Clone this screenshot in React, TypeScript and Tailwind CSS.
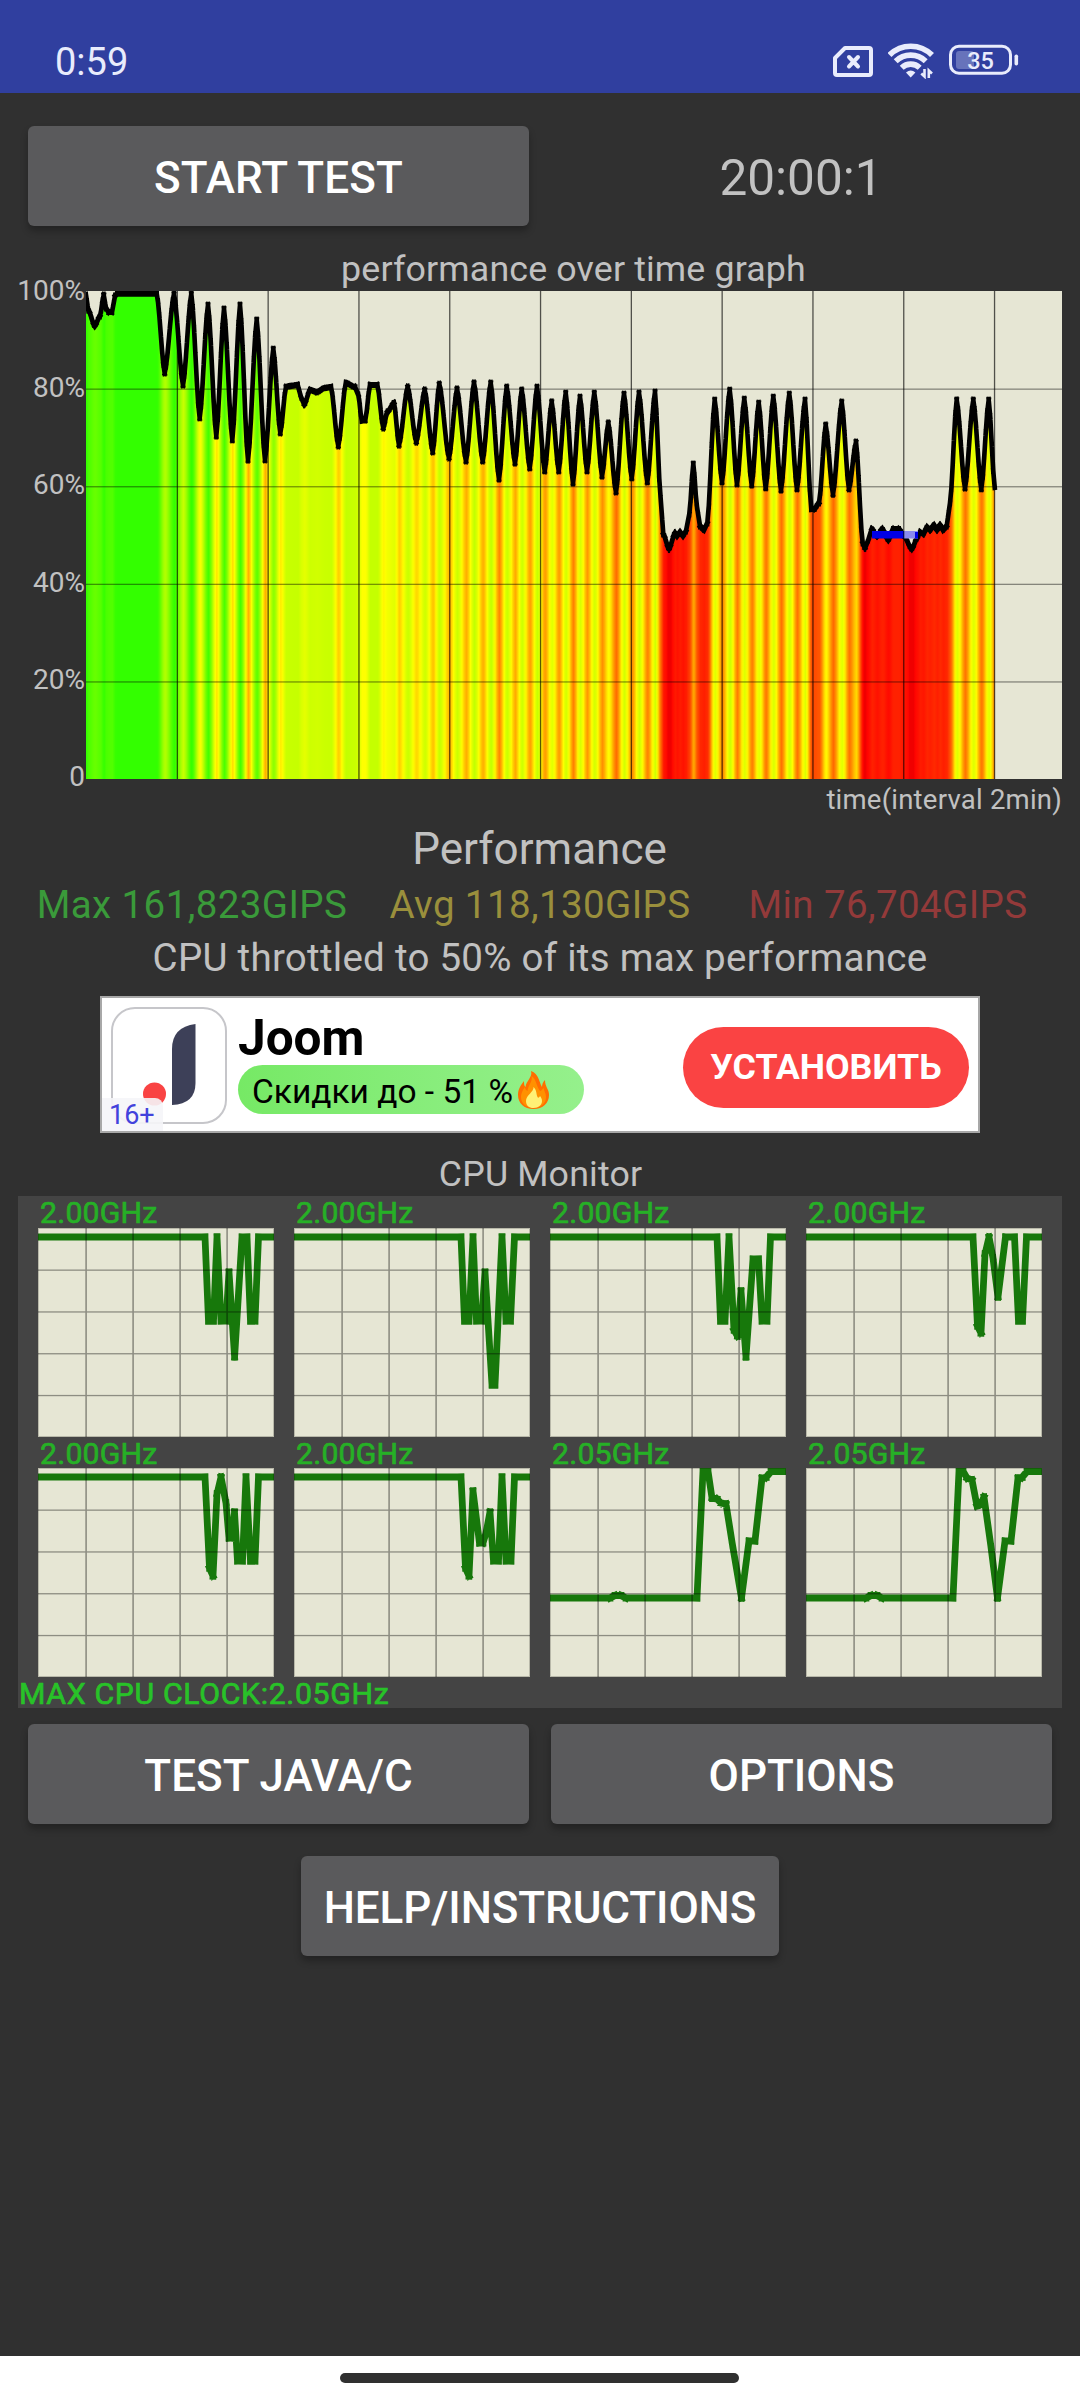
import type { ReactNode } from 'react';

type Point = [number, number];

const CHART_W = 976;
const CHART_H = 488;

// turning points of the performance curve, in chart pixels
const PERF: Point[] = [
  [0, 4], [2.3, 19], [8.7, 35], [14, 25], [17.7, 4], [20, 17], [22.5, 21], [26, 21], [29, 5], [31.3, 2.6],
  [70.7, 2.6], [78.7, 82], [88, 3], [97, 94], [105.3, 3], [113.7, 127], [122, 14], [130.3, 145], [138, 18],
  [146.3, 149], [154, 14], [162, 169], [170.7, 29], [179, 169], [187.3, 58], [194.3, 142], [200, 96],
  [204, 95], [211.7, 94], [215, 106], [218.3, 113.5], [224, 99], [230.7, 101], [239, 97], [245, 96],
  [252.3, 155], [259.8, 92], [269, 96], [272.3, 104], [275.8, 129.5], [279.3, 129], [284, 94], [291.3, 94],
  [297.3, 137], [301.3, 121], [308, 112], [313, 154], [321.7, 96], [330.3, 151], [338.7, 99], [346.7, 161],
  [353.3, 93], [363, 167], [371, 98], [380, 170], [388, 92], [396.7, 170], [404.7, 92], [413, 188],
  [420.7, 96], [429, 172], [435.7, 99], [443.7, 177], [451, 96], [458.7, 180], [465.7, 111], [472.7, 180],
  [479.7, 102], [487, 192], [494, 106], [501, 180], [508.3, 102], [516, 185], [522.3, 132], [530, 201],
  [538, 103], [545.7, 187], [553, 102], [561.3, 191], [569, 101], [574.7, 208], [577.3, 243], [583, 258],
  [589, 242], [591, 245], [594, 241], [597, 245], [600, 240], [603.3, 223], [607.3, 173], [611, 216], [614, 235],
  [618, 239], [621.3, 232], [628.7, 109], [636, 191], [643.7, 99], [651, 193], [658.3, 108], [665.7, 194],
  [672.7, 112], [679.7, 197], [687.3, 106], [695, 199], [703.3, 103], [711, 198], [719, 109], [725.3, 218],
  [728.3, 218], [733, 212], [739.7, 134], [747, 203], [755.7, 111], [763, 198], [770, 151], [776.7, 252],
  [779, 257], [782.3, 249], [785.7, 238], [791, 245], [796.3, 238], [802.3, 249], [807.3, 238], [812.7, 238],
  [818, 245], [825.7, 258], [831.3, 247], [834, 241], [837.3, 243], [841, 236], [844, 239], [848, 234],
  [851, 239], [854, 234], [857, 239], [860.7, 235], [864, 212], [870.7, 109], [879, 197], [887.3, 109],
  [895.3, 198], [902.7, 109], [908.7, 196],
];

// eases between turning points so peaks and dips are slightly rounded
function densify(points: Point[]): Point[] {
  const out: Point[] = [points[0]];
  for (let i = 1; i < points.length; i++) {
    const [x0, y0] = points[i - 1];
    const [x1, y1] = points[i];
    const steps = Math.max(1, Math.round((x1 - x0) / 1.4));
    for (let s = 1; s <= steps; s++) {
      const t = s / steps;
      const eased = t * 0.4 + ((1 - Math.cos(Math.PI * t)) / 2) * 0.6;
      out.push([x0 + (x1 - x0) * t, y0 + (y1 - y0) * eased]);
    }
  }
  return out;
}

const CURVE = densify(PERF);

function heat(y: number) {
  const pct = 100 - (y / CHART_H) * 100;
  const r = pct < 48 ? 240 : Math.min(255, Math.round(51 + (99.5 - pct) * 7.8));
  const g = Math.max(0, Math.min(255, Math.round((pct - 48) * 10.2)));
  return `rgb(${r},${g},0)`;
}

function toPath(points: Point[]) {
  return points.map(([x, y], i) => `${i ? 'L' : 'M'}${x.toFixed(1)} ${y.toFixed(1)}`).join('');
}

// one separate stroke per sample pair, so every segment gets its own caps
function toSegments(points: Point[], sx: number) {
  return points
    .slice(1)
    .map(([x, y], i) => `M${(points[i][0] / sx).toFixed(2)} ${points[i][1].toFixed(1)}L${(x / sx).toFixed(2)} ${y.toFixed(1)}`)
    .join('');
}

function PerformanceChart() {
  const end = CURVE[CURVE.length - 1][0];
  return (
    <svg width={CHART_W} height={CHART_H} viewBox={`0 0 ${CHART_W} ${CHART_H}`} className="block bg-[#e6e6d4]">
      <defs>
        <linearGradient id="heat" gradientUnits="userSpaceOnUse" x1="0" x2={end} y1="0" y2="0">
          {CURVE.map(([x, y], i) => (
            <stop key={i} offset={(x + 0.5) / end} stopColor={heat(y)} />
          ))}
        </linearGradient>
      </defs>
      <path d={`${toPath(CURVE)}V${CHART_H}H0Z`} fill="url(#heat)" />
      <path
        d={toSegments(CURVE, 0.75)}
        transform="scale(0.75 1)"
        fill="none"
        stroke="#000"
        strokeWidth="6.2"
        strokeLinecap="square"
      />
      <rect x="786" y="240" width="32" height="7.5" fill="#0000e6" />
      <rect x="818" y="240" width="14" height="7.5" fill="#8a8aee" />
      <rect x="829" y="241" width="3" height="6.5" fill="#0000e6" />
      {[1, 2, 3, 4].map((i) => (
        <rect key={i} x="0" y={i * 97.6 - 0.1} width={CHART_W} height="1.3" fill="#000" opacity="0.42" />
      ))}
      {[1, 2, 3, 4, 5, 6, 7, 8, 9, 10].map((i) => (
        <rect key={i} x={i * 90.8 - 0.1} y="0" width="1.3" height={CHART_H} fill="#000" opacity="0.65" />
      ))}
    </svg>
  );
}

const DIP_TAIL: Point[] = [[191.5, 130], [199, 73], [205, 73], [212, 10], [216, 9.5], [221, 3.5], [236, 3.5]];

const CORES: { label: string; points: Point[] }[] = [
  {
    label: '2.00GHz',
    points: [[0, 9], [167, 9], [170.5, 93], [175.5, 93], [179, 9], [183, 93], [188, 93], [191, 44], [196.6, 129],
      [204, 9], [209, 9], [212.5, 93], [217, 93], [220.5, 9], [236, 9]],
  },
  {
    label: '2.00GHz',
    points: [[0, 9], [167, 9], [170.5, 93], [175, 93], [179, 9], [182.5, 93], [187.5, 93], [191, 44], [198, 157],
      [201, 157], [208, 9], [212, 93], [216.5, 93], [220.5, 9], [236, 9]],
  },
  {
    label: '2.00GHz',
    points: [[0, 9], [167, 9], [170.5, 93], [175, 93], [179, 9], [184, 102], [187.5, 108], [191, 63], [196, 129],
      [203, 31], [208.5, 31], [212, 93], [217, 93], [220.5, 9], [236, 9]],
  },
  {
    label: '2.00GHz',
    points: [[0, 9], [167, 9], [171.5, 98], [175, 105], [179, 26], [183, 9], [187, 30], [192, 69], [199.5, 9],
      [208.5, 9], [212.5, 93], [216.5, 93], [220.5, 9], [236, 9]],
  },
  {
    label: '2.00GHz',
    points: [[0, 9], [167, 9], [171.5, 100], [175, 108], [179, 26], [183, 9], [188, 35], [191, 70], [194, 70],
      [196.5, 44], [199.5, 93], [204.5, 93], [208, 9], [212.5, 93], [217, 93], [220.5, 9], [236, 9]],
  },
  {
    label: '2.00GHz',
    points: [[0, 9], [167, 9], [171.5, 100], [175, 108], [179, 23], [185.5, 75], [189, 75], [192, 65], [196, 44],
      [199.5, 93], [204.5, 93], [208, 9], [212, 93], [217, 93], [220.5, 9], [236, 9]],
  },
  {
    label: '2.05GHz',
    points: [[0, 130], [60, 130], [65, 127.5], [71, 127.5], [76, 130], [147, 130], [153, 3], [158, 3], [162, 30],
      [167, 31], [171, 35], [176, 36], [182.5, 77], ...DIP_TAIL],
  },
  {
    label: '2.05GHz',
    points: [[0, 130], [60, 130], [65, 127.5], [71, 127.5], [76, 130], [147, 130], [153, 3], [157, 3], [161, 10],
      [166, 12], [171, 38], [175, 36], [178, 29], [185, 79], ...DIP_TAIL],
  },
];

function CoreChart({ label, points }: { label: string; points: Point[] }) {
  return (
    <div>
      <div className="h-[31.5px] pt-px pl-0.5 text-[30.25px] leading-[31px] tracking-[0.2px] text-[#26b026] [-webkit-text-stroke:0.7px_#26b026]">
        {label}
      </div>
      <svg width="236" height="209" viewBox="0 0 236 209" className="block bg-[#e6e6d4]">
        <path
          d={toSegments(points, 0.94)}
          transform="scale(0.94 1)"
          fill="none"
          stroke="#17780b"
          strokeWidth="7.2"
          strokeLinecap="square"
        />
        <g fill="#000" opacity="0.38">
          {[1, 2, 3, 4].map((i) => (
            <rect key={i} x="0" y={i * 41.8 - 0.3} width="236" height="1.3" />
          ))}
          {[1, 2, 3, 4].map((i) => (
            <rect key={i} x={i * 47 + 0.3} y="0" width="1.6" height="209" />
          ))}
        </g>
        <rect x="0.5" y="0.5" width="235" height="208" fill="none" stroke="#000" opacity="0.2" />
      </svg>
    </div>
  );
}

function Button({ children, className }: { children: ReactNode; className: string }) {
  return (
    <button
      className={`h-[100px] rounded-[6px] bg-[#5a5a5c] pt-[3px] text-[44px] font-medium text-white shadow-[0_5px_7px_rgba(0,0,0,0.28)] ${className}`}
    >
      {children}
    </button>
  );
}

function StatusBar() {
  return (
    <div className="flex h-[93px] justify-between bg-[#303f9f] pt-[43px] pl-[55px] pr-[61px] text-[#e9ecfc]">
      <span className="text-[38px] leading-[39px]">0:59</span>
      <div className="flex items-start">
        {/* SIM */}
        <svg width="41" height="35" viewBox="0 0 41 35" fill="none" stroke="currentColor" className="mr-[15px]">
          <path d="M13 5H37Q39 5 39 7V30Q39 32 37 32H5Q3 32 3 30V15Z" strokeWidth="4" strokeLinejoin="round" />
          <path d="M17 14L26 23.500M26 14L17 23.500" strokeWidth="4" strokeLinecap="round" />
        </svg>
        {/* Wi-Fi */}
        <svg width="46" height="36" viewBox="0 0 46 36" fill="none" stroke="currentColor" strokeWidth="5.600" className="mr-[15px]">
          <path d="M1.500 12A30 30 0 0 1 44 12" />
          <path d="M7.700 18.200A21.500 21.500 0 0 1 37.700 18.200" />
          <path d="M13.700 24.700A13 13 0 0 1 31.700 24.700" />
          <path d="M22.700 34.500L18 29.500Q22.700 25.500 27.400 29.500Z" fill="currentColor" stroke="none" />
          <path d="M36.500 26V33.500L33.300 30.500M40.800 35V27.500L44 30.500" strokeWidth="2.600" />
        </svg>
        {/* Battery */}
        <svg width="70" height="34" viewBox="0 0 70 34">
          <rect x="1.500" y="3.300" width="60" height="27" rx="8.500" fill="none" stroke="currentColor" strokeWidth="3" />
          <rect x="7" y="8" width="18" height="18" rx="3" fill="currentColor" opacity="0.3" />
          <rect x="65.500" y="11.500" width="3.600" height="11" rx="1.800" fill="currentColor" />
          <text x="31.500" y="25.500" fontSize="23.500" fontWeight="500" textAnchor="middle" fill="currentColor">35</text>
        </svg>
      </div>
    </div>
  );
}

function Flame() {
  return (
    <svg width="31" height="38" viewBox="0 0 31 38" className="shrink-0">
      <path
        d="M13 0C15 6 8 10 7.500 16C6 15 6 12 6 10C3 14 0 18 0 24C0 32 6 38 15.500 38C25 38 31 32 31 24C31 18 27 16 27 9C25 11 24 13 24 16C21 11 21 3 13 0Z"
        fill="#ff6d00"
      />
      <path
        d="M13.500 5C15 11 10 14 9.500 20C8 19 7 18 7 16C4 20 3 23 3 26C3 33 9 37 15.500 37C23 37 28 32 28 26C28 22 26 20 25.500 17C24 19 23 20 22 20C18 15 19 9 13.500 5Z"
        fill="#ff9100"
      />
      <path
        d="M15.500 16C16 21 8 24 8 30C8 34.500 11 37 15.500 37C20.500 37 24 34 24 30C24 28 23 26 22 25C21 27 20 27 19.500 26C18 23 19 19 15.500 16Z"
        fill="#fff176"
      />
    </svg>
  );
}

function AdBanner() {
  return (
    <div className="relative mx-auto mt-2.5 flex h-[137px] w-[880px] border-2 border-[#a8a8a8] bg-white text-black">
      <svg width="117" height="117" viewBox="0 0 117 117" className="mt-[9px] ml-[9px]">
        <rect x="1" y="1" width="114" height="115" rx="23" fill="#fff" stroke="#c6c6ca" strokeWidth="2" />
        <path d="M61 98V42Q61 20 84.500 17V76Q84.500 97 61 98Z" fill="#3d4058" />
        <circle cx="43.500" cy="87" r="11.500" fill="#f94343" />
      </svg>
      <div className="ml-[10px] flex-1">
        <div className="mt-[12px] h-[55px] text-[49.5px] leading-[57px] font-bold">Joom</div>
        <div className="flex h-[49px] w-[346px] items-center rounded-full bg-linear-to-r from-[#76e965] to-[#95f08c] pl-[14px] text-[33.5px] leading-none">
          <span className="mr-[5px] whitespace-nowrap pt-1">Скидки до - 51 %</span>
          <Flame />
        </div>
      </div>
      <div className="mt-[29px] mr-[9px] flex h-[81px] w-[286px] items-center justify-center rounded-full bg-[#fa4343] text-[35.75px] font-bold text-white">
        УСТАНОВИТЬ
      </div>
      <span className="absolute bottom-0 left-0 h-[33px] w-[61px] rounded-tr-lg bg-[#f5f5f8]/90 pl-[7px] text-[27px] leading-[34px] text-[#4242dc]">
        16+
      </span>
    </div>
  );
}

export default function App() {
  return (
    <div className="flex h-[2400px] w-[1080px] flex-col bg-[#303030] font-['Roboto',sans-serif] text-[#c1c1c1]">
      <StatusBar />

      <div className="mt-[33px] flex h-[100px] items-center pr-[7px] pl-7">
        <Button className="w-[501px] tracking-[0.15px]">START TEST</Button>
        <span className="flex-1 pt-1.5 text-center text-[49.5px] leading-none">20:00:1</span>
      </div>

      <h2 className="mt-[19px] h-[46px] pl-[67px] text-center text-[35.75px] leading-[48px] tracking-[0.15px]">
        performance over time graph
      </h2>
      <div className="flex h-[488px]">
        <div className="-mt-4 -mb-[14px] flex w-[86px] flex-col justify-between pr-px text-right text-[28px] leading-[32px]">
          <span>100%</span>
          <span>80%</span>
          <span>60%</span>
          <span>40%</span>
          <span>20%</span>
          <span>0</span>
        </div>
        <PerformanceChart />
      </div>
      <div className="h-10 pr-[18px] text-right text-[27.5px] leading-[41px] tracking-[0.22px]">
        time(interval 2min)
      </div>

      {/* Summary */}
      <div className="h-[60px] pr-px text-center text-[44px] leading-[60px]">Performance</div>
      <div className="grid h-[51px] grid-cols-3 px-[18px] text-center text-[38.5px] leading-[51px] tracking-[0.4px]">
        <span className="text-[#3a9a3a]">Max 161,823GIPS</span>
        <span className="text-[#9a8f3c]">Avg 118,130GIPS</span>
        <span className="text-[#933a3a]">Min 76,704GIPS</span>
      </div>
      <div className="h-14 text-center text-[38.5px] leading-[56px] tracking-[0.27px]">
        CPU throttled to 50% of its max performance
      </div>

      <AdBanner />

      {/* CPU monitor */}
      <h2 className="mt-[18px] h-[45px] pl-px text-center text-[35.75px] leading-[46px] tracking-[0.15px]">CPU Monitor</h2>
      <div className="mx-[18px] h-[512px] bg-[#444444]">
        <div className="grid grid-cols-[repeat(4,236px)] gap-x-5 pl-5">
          {CORES.map((core, i) => (
            <CoreChart key={i} label={core.label} points={core.points} />
          ))}
        </div>
        <div className="pt-0.5 pl-px text-[30.25px] leading-[30px] tracking-[0.65px] text-[#28c228] [-webkit-text-stroke:0.7px_#28c228]">
          MAX CPU CLOCK:2.05GHz
        </div>
      </div>

      <div className="mt-4 flex justify-between px-7">
        <Button className="w-[501px]">TEST JAVA/C</Button>
        <Button className="w-[501px]">OPTIONS</Button>
      </div>
      <div className="mt-8 flex justify-center">
        <Button className="w-[478px] tracking-[-0.1px]">HELP/INSTRUCTIONS</Button>
      </div>

      {/* Gesture bar */}
      <div className="mt-auto flex h-11 justify-center bg-white pt-[17px] pr-[2px]">
        <div className="h-2.5 w-[399px] rounded-full bg-[#303030]" />
      </div>
    </div>
  );
}
